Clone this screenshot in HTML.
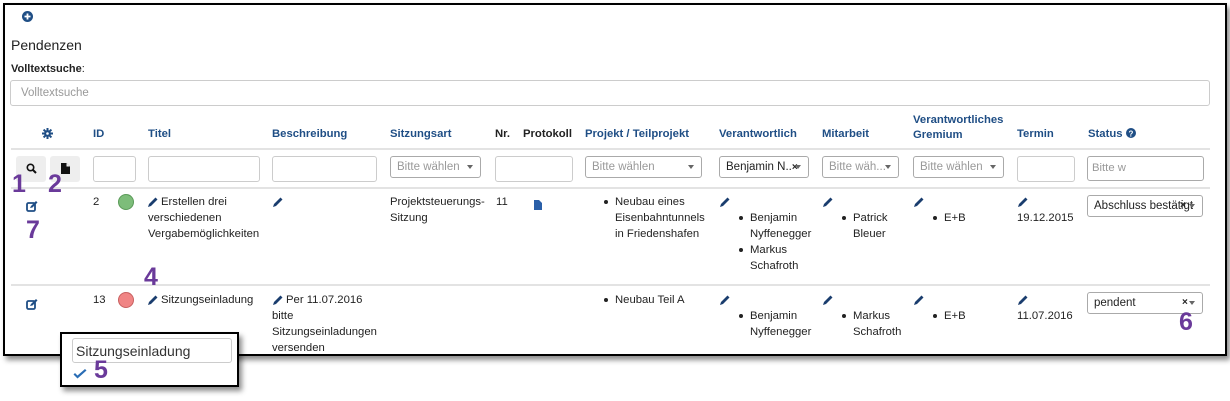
<!DOCTYPE html>
<html><head><meta charset="utf-8"><style>
*{box-sizing:border-box;margin:0;padding:0}
body{width:1230px;height:401px;background:#fff;font-family:"Liberation Sans",Arial,sans-serif;font-size:11.3px;color:#222;position:relative;overflow:hidden}
.a{position:absolute;white-space:nowrap}
.frame{position:absolute;left:3px;top:3px;width:1224px;height:353px;border:2px solid #000;box-shadow:3px 4px 5px rgba(0,0,0,.45)}
.h{position:absolute;color:#1f4e85;font-weight:bold;font-size:11.3px;white-space:nowrap}
.inp{position:absolute;border:1px solid #ccc;border-radius:3px;background:#fff}
.sel{position:absolute;border:1px solid #aaa;border-radius:3px;background:#fff;color:#999;font-size:11.5px;padding:4px 0 0 6px;white-space:nowrap;overflow:hidden}
.sel .c{position:absolute;right:7px;top:8px;width:0;height:0;border-left:3.5px solid transparent;border-right:3.5px solid transparent;border-top:4px solid #666}
.line{position:absolute;left:11px;width:1199px;height:2px;background:#e3e3e3}
.num{position:absolute;color:#6a3a9a;font-weight:bold;font-size:25px;line-height:1}
.t{position:absolute;line-height:16px;white-space:nowrap}
ul{list-style:none}
li{position:relative}
li:before{content:"";position:absolute;left:-11px;top:6px;width:4px;height:4px;border-radius:50%;background:#222}
.pen{position:absolute;width:12px;height:12px}
</style></head><body>
<svg width="0" height="0" style="position:absolute"><defs>
<symbol id="p" viewBox="0 0 12 12"><path d="M1 11 L2 8 L8.5 1.5 L10.5 3.5 L4 10 Z" fill="#1a3d6e"/></symbol>
</defs></svg>
<div class="frame"></div>
<svg class="a" style="left:22px;top:11px" width="11" height="11" viewBox="0 0 11 11"><circle cx="5.5" cy="5.5" r="5.5" fill="#1f4e85"/><path d="M5.5 2.5v6M2.5 5.5h6" stroke="#fff" stroke-width="1.8"/></svg>
<div class="a" style="left:11px;top:37px;font-size:14px">Pendenzen</div>
<div class="a" style="left:11px;top:63px;font-size:11px"><b>Volltextsuche</b>:</div>
<div class="inp" style="left:10px;top:80px;width:1200px;height:26px;color:#999;padding:6px 0 0 10px;font-size:11.5px">Volltextsuche</div>

<svg class="a" style="left:42px;top:128px" width="11" height="11" viewBox="0 0 11 11"><g stroke="#1f4e85" stroke-width="2"><path d="M5.5 0v11M0 5.5h11M1.6 1.6l7.8 7.8M9.4 1.6l-7.8 7.8"/></g><circle cx="5.5" cy="5.5" r="3.4" fill="#1f4e85"/><circle cx="5.5" cy="5.5" r="1.3" fill="#fff"/></svg>
<div class="h" style="left:93px;top:128px">ID</div>
<div class="h" style="left:148px;top:128px">Titel</div>
<div class="h" style="left:272px;top:128px">Beschreibung</div>
<div class="h" style="left:390px;top:128px">Sitzungsart</div>
<div class="h" style="left:495px;top:128px;color:#222">Nr.</div>
<div class="h" style="left:523px;top:128px;color:#222">Protokoll</div>
<div class="h" style="left:585px;top:128px">Projekt / Teilprojekt</div>
<div class="h" style="left:719px;top:128px">Verantwortlich</div>
<div class="h" style="left:822px;top:128px">Mitarbeit</div>
<div class="h" style="left:913px;top:113px;line-height:15px">Verantwortliches<br>Gremium</div>
<div class="h" style="left:1017px;top:128px">Termin</div>
<div class="h" style="left:1088px;top:128px">Status</div>
<svg class="a" style="left:1126px;top:128px" width="10" height="10" viewBox="0 0 10 10"><circle cx="5" cy="5" r="5" fill="#1f4e85"/><text x="5" y="8.3" font-size="8" font-weight="bold" fill="#fff" text-anchor="middle" font-family="Liberation Sans">?</text></svg>
<div class="line" style="top:148px"></div>

<div class="a" style="left:16px;top:156px;width:30px;height:26px;background:#eee;border-radius:3px"></div>
<svg class="a" style="left:26px;top:163px" width="11" height="11" viewBox="0 0 11 11"><circle cx="4.5" cy="4.5" r="3.2" fill="none" stroke="#111" stroke-width="1.6"/><path d="M7 7l3 3" stroke="#111" stroke-width="2"/></svg>
<div class="a" style="left:50px;top:156px;width:30px;height:26px;background:#eee;border-radius:3px"></div>
<svg class="a" style="left:61px;top:163px" width="9" height="11" viewBox="0 0 9 11"><path d="M0 0h5.5l3.5 3.5V11H0Z" fill="#111"/><path d="M5.5 0v3.5H9" fill="#eee"/></svg>
<div class="inp" style="left:93px;top:156px;width:43px;height:26px"></div>
<div class="inp" style="left:148px;top:156px;width:112px;height:26px"></div>
<div class="inp" style="left:272px;top:156px;width:105px;height:26px"></div>
<div class="sel" style="left:390px;top:156px;width:91px;height:22px">Bitte wählen<span class="c"></span></div>
<div class="inp" style="left:495px;top:156px;width:78px;height:26px"></div>
<div class="sel" style="left:585px;top:156px;width:117px;height:22px">Bitte wählen<span class="c"></span></div>
<div class="sel" style="left:719px;top:156px;width:90px;height:22px;color:#222">Benjamin N..<b style="font-size:10px">×</b><span class="c"></span></div>
<div class="sel" style="left:822px;top:156px;width:77px;height:22px">Bitte wäh...<span class="c"></span></div>
<div class="sel" style="left:913px;top:156px;width:91px;height:22px">Bitte wählen<span class="c"></span></div>
<div class="inp" style="left:1017px;top:156px;width:58px;height:26px"></div>
<div class="inp" style="left:1087px;top:156px;width:117px;height:25px;border-color:#aaa;color:#999;padding:5px 0 0 4px">Bitte w</div>
<div class="line" style="top:187px"></div>

<!-- row 1 -->
<svg class="a" style="left:26px;top:201px" width="12" height="11" viewBox="0 0 12 11"><rect x="1" y="2" width="8" height="8" rx="1.5" fill="none" stroke="#1f4e85" stroke-width="1.8"/><path d="M4 7l1-2 5-5 1.5 1.5-5 5z" fill="#1f4e85"/></svg>
<div class="t" style="left:93px;top:194px">2</div>
<div class="a" style="left:118px;top:194px;width:16px;height:16px;border-radius:50%;background:#7dbd7a;border:1px solid #5a9a58"></div>
<svg class="pen" style="left:147px;top:196px"><use href="#p"/></svg>
<div class="t" style="left:161px;top:194px">Erstellen drei</div>
<div class="t" style="left:148px;top:210px">verschiedenen<br>Vergabemöglichkeiten</div>
<svg class="pen" style="left:272px;top:196px"><use href="#p"/></svg>
<div class="t" style="left:390px;top:194px">Projektsteuerungs-<br>Sitzung</div>
<div class="t" style="left:496px;top:194px">11</div>
<svg class="a" style="left:534px;top:200px" width="8" height="10" viewBox="0 0 8 10"><path d="M0 0h5l3 3v7H0Z" fill="#2a5fa8"/></svg>
<ul class="t" style="left:615px;top:194px"><li>Neubau eines<br>Eisenbahntunnels<br>in Friedenshafen</li></ul>
<svg class="pen" style="left:719px;top:196px"><use href="#p"/></svg>
<ul class="t" style="left:750px;top:210px"><li>Benjamin<br>Nyffenegger</li><li>Markus<br>Schafroth</li></ul>
<svg class="pen" style="left:822px;top:196px"><use href="#p"/></svg>
<ul class="t" style="left:853px;top:210px"><li>Patrick<br>Bleuer</li></ul>
<svg class="pen" style="left:913px;top:196px"><use href="#p"/></svg>
<ul class="t" style="left:944px;top:210px"><li>E+B</li></ul>
<svg class="pen" style="left:1017px;top:196px"><use href="#p"/></svg>
<div class="t" style="left:1017px;top:210px">19.12.2015</div>
<div class="sel" style="left:1087px;top:195px;width:116px;height:22px;color:#222">Abschluss bestätigt<b style="position:absolute;left:92px;top:4px;font-size:10px">×</b><span class="c"></span></div>
<div class="line" style="top:284px"></div>

<!-- row 2 -->
<svg class="a" style="left:26px;top:299px" width="12" height="11" viewBox="0 0 12 11"><rect x="1" y="2" width="8" height="8" rx="1.5" fill="none" stroke="#1f4e85" stroke-width="1.8"/><path d="M4 7l1-2 5-5 1.5 1.5-5 5z" fill="#1f4e85"/></svg>
<div class="t" style="left:93px;top:292px">13</div>
<div class="a" style="left:118px;top:292px;width:16px;height:16px;border-radius:50%;background:#f08585;border:1px solid #c86060"></div>
<svg class="pen" style="left:147px;top:294px"><use href="#p"/></svg>
<div class="t" style="left:161px;top:292px">Sitzungseinladung</div>
<svg class="pen" style="left:272px;top:294px"><use href="#p"/></svg>
<div class="t" style="left:286px;top:292px">Per 11.07.2016</div>
<div class="t" style="left:272px;top:308px">bitte<br>Sitzungseinladungen<br>versenden</div>
<ul class="t" style="left:615px;top:292px"><li>Neubau Teil A</li></ul>
<svg class="pen" style="left:719px;top:294px"><use href="#p"/></svg>
<ul class="t" style="left:750px;top:308px"><li>Benjamin<br>Nyffenegger</li></ul>
<svg class="pen" style="left:822px;top:294px"><use href="#p"/></svg>
<ul class="t" style="left:853px;top:308px"><li>Markus<br>Schafroth</li></ul>
<svg class="pen" style="left:913px;top:294px"><use href="#p"/></svg>
<ul class="t" style="left:944px;top:308px"><li>E+B</li></ul>
<svg class="pen" style="left:1017px;top:294px"><use href="#p"/></svg>
<div class="t" style="left:1017px;top:308px">11.07.2016</div>
<div class="sel" style="left:1087px;top:292px;width:116px;height:22px;color:#222">pendent<b style="position:absolute;left:94px;top:4px;font-size:10px">×</b><span class="c"></span></div>

<!-- popup -->
<div class="a" style="left:60px;top:332px;width:179px;height:55px;border:2px solid #000;background:#fff;box-shadow:3px 4px 5px rgba(0,0,0,.45)"></div>
<div class="inp" style="left:72px;top:338px;width:160px;height:25px;font-size:14px;color:#333;padding:4px 0 0 3px">Sitzungseinladung</div>
<svg class="a" style="left:73px;top:369px" width="14" height="10" viewBox="0 0 14 10"><path d="M0.5 5.5l4 4 9-8-1.5-1.5-7.5 6.5-2.5-2.5z" fill="#2a6db5"/></svg>

<!-- numbers -->
<div class="num" style="left:12px;top:172px">1</div>
<div class="num" style="left:48px;top:172px">2</div>
<div class="num" style="left:26px;top:218px">7</div>
<div class="num" style="left:144px;top:265px">4</div>
<div class="num" style="left:1179px;top:310px">6</div>
<div class="num" style="left:94px;top:358px">5</div>
</body></html>
